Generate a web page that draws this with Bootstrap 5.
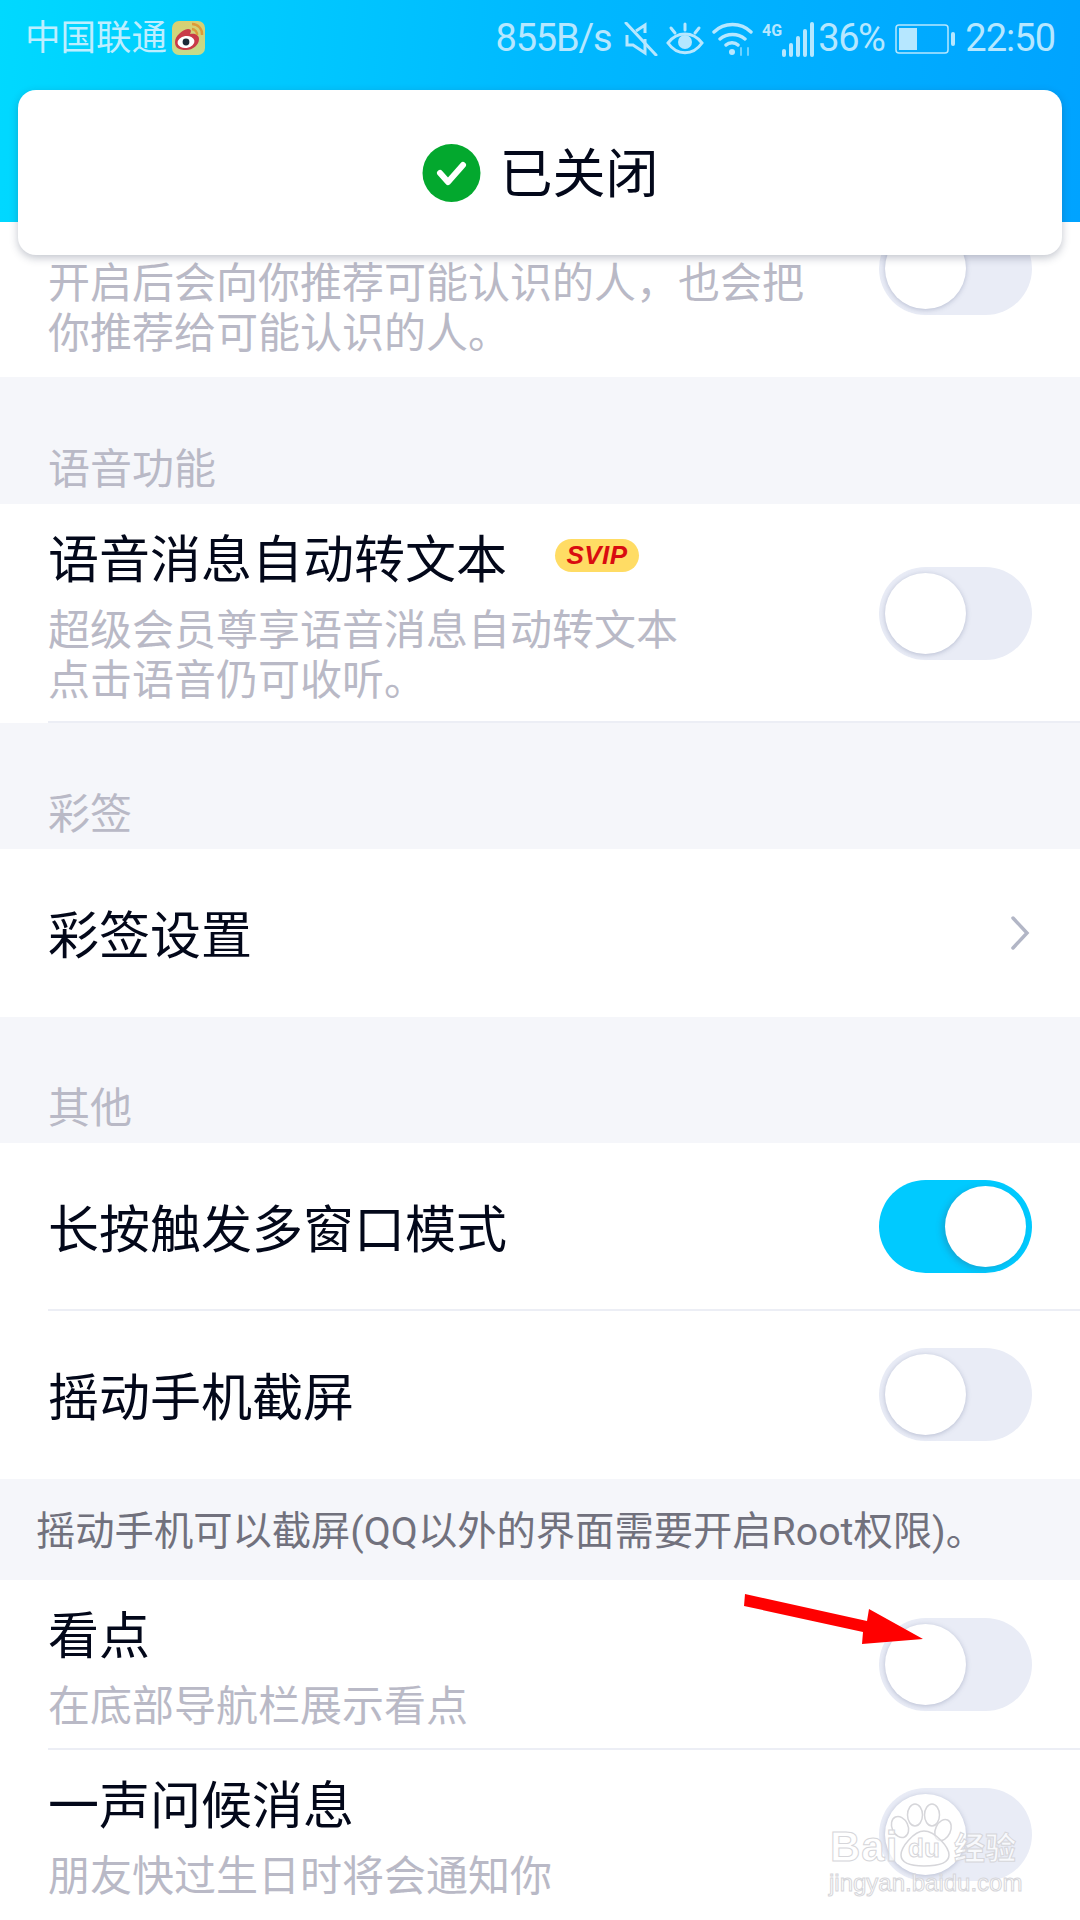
<!DOCTYPE html>
<html lang="zh">
<head>
    <meta charset="UTF-8">
    <meta name="viewport" content="width=device-width, initial-scale=1.0">
    <title>设置</title>
    <link href="https://cdn.jsdelivr.net/npm/bootstrap@5.3.2/dist/css/bootstrap.min.css" rel="stylesheet">
    <style>
        body {
            width: 1080px;
            height: 1920px;
            overflow: hidden;
            background: #f5f6fa;
            font-family: Roboto, "Noto Sans CJK SC", sans-serif;
            color: #03081a;
        }
        .page-wrap { height: 1920px; overflow: hidden; }
        /* top bar */
        .top-head {
            height: 222px;
            background: linear-gradient(95deg, #00d9ff 0%, #00b9ff 50%, #00a3ff 100%);
        }
        .status-bar {
            height: 74px;
            padding: 3px 25px 0 25px;
            color: #b6e7ff;
            font-size: 38px;
            line-height: 71px;
        }
        .carrier { color: #bdeeff; font-size: 35.5px; }
        .speed { letter-spacing: -1.2px; margin-right: 13px; }
        .pct { letter-spacing: -1.5px; margin: 0 11px 0 4px; }
        .clock { margin-left: 10px; letter-spacing: -1px; }
        .weibo-ico { margin-left: 5px; margin-top: -2px; }
        /* toast */
        .toast-box {
            position: absolute;
            left: 18px;
            top: 90px;
            width: 1044px;
            height: 165px;
            background: #fff;
            border-radius: 18px;
            box-shadow: 0 3px 8px rgba(40, 50, 80, .28);
            font-size: 53px;
            z-index: 5;
            gap: 19px;
        }
        .toast-txt { padding-top: 7px; }
        /* rows */
        .set-row { background: #fff; position: relative; padding-left: 48px; }
        .set-row.line-b::after {
            content: "";
            position: absolute;
            left: 48px;
            right: 0;
            bottom: 0;
            height: 2px;
            background: #eceef5;
        }
        .rh-first { height: 155px; }
        .rh-voice { height: 219px; }
        .rh-one { height: 168px; }
        .rh-news { height: 170px; }
        .rh-last { height: 170px; }
        .row-title { font-size: 51px; line-height: 60px; color: #03081a; }
        .row-title.solo { padding-top: 8px; }
        .row-desc { font-size: 42px; line-height: 50px; color: #b9b9c6; }
        .first-desc { padding-top: 37px; }
        .text-stack { padding-top: 27px; }
        .text-stack .row-desc { margin-top: 15px; }
        .sec-label {
            height: 127px;
            padding: 0 0 9px 48px;
            font-size: 42px;
            line-height: 50px;
            color: #b9b9c6;
        }
        .sec-label.is-short { height: 126px; }
        .sw {
            width: 153px;
            height: 93px;
            border-radius: 47px;
            background: #e9ecf6;
            margin-right: 48px;
            padding: 6px;
            flex-shrink: 0;
        }
        .rh-one .sw, .rh-news .sw, .rh-last .sw { margin-bottom: 1px; }
        .sw-knob {
            width: 81px;
            height: 81px;
            border-radius: 50%;
            background: #fff;
            box-shadow: 0 1px 5px rgba(90, 100, 140, .35);
        }
        .sw.is-on { background: #00caff; }
        .sw.is-on .sw-knob { margin-left: auto; box-shadow: -3px 2px 6px rgba(60, 90, 120, .3); }
        .svip-tag {
            width: 84px;
            height: 33px;
            border-radius: 17px;
            background: #ffdc64;
            color: #d90c10;
            font: italic 700 26px/33px "Liberation Sans", sans-serif;
            letter-spacing: .5px;
            text-align: center;
            margin: 0 0 12px 48px;
        }
        .chevron { margin-right: 50px; }
        .note-line {
            height: 101px;
            padding: 28px 0 0 36px;
            font-size: 39.3px;
            line-height: 50px;
            color: #71717d;
        }
        /* things lying on top of the screenshot */
        .mark-layer { position: absolute; left: 0; top: 0; width: 1080px; height: 1920px; pointer-events: none; z-index: 6; }
        .wm-text {
            position: absolute;
            z-index: 7;
            color: rgba(255, 255, 255, .7);
            -webkit-text-stroke: 1px #d6d6da;
            font-family: "Liberation Sans", "Noto Sans CJK SC", sans-serif;
            white-space: nowrap;
        }
        .wm-bai { left: 830px; top: 1822px; font-size: 42px; line-height: 50px; font-weight: 700; letter-spacing: 1px; }
        .wm-du { left: 908px; top: 1832px; font-size: 26px; line-height: 32px; font-weight: 700; }
        .wm-cn { left: 954px; top: 1827px; font-size: 31px; line-height: 44px; font-weight: 700; }
        .wm-url { left: 829px; top: 1868px; font-size: 24px; line-height: 30px; }
    </style>
</head>
<body class="position-relative">
<div class="page-wrap">
    <header class="top-head">
        <div class="status-bar d-flex align-items-center">
            <span class="carrier">中国联通</span>
            <svg class="weibo-ico" width="33" height="34" viewBox="0 0 33 34">
                <defs>
                    <linearGradient id="wbBg" x1="0" y1="0" x2="0" y2="1">
                        <stop offset="0" stop-color="#d8cf72"/>
                        <stop offset="1" stop-color="#c4dc8c"/>
                    </linearGradient>
                </defs>
                <rect width="33" height="34" rx="7" fill="url(#wbBg)"/>
                <path d="M3 21c0-6 7-12 13-13 4 0 3 3 2 5 5-1 9 1 9 5 0 6-6 11-13 11S3 27 3 21z" fill="#c93a48"/>
                <ellipse cx="14" cy="21" rx="8.5" ry="6" fill="#fff" transform="rotate(-8 14 21)"/>
                <circle cx="14" cy="21" r="3.4" fill="#1c2a38"/>
                <path d="M20 3a10 10 0 0 1 10 11M20 8a5.5 5.5 0 0 1 5 6" fill="none" stroke="#dc9a3a" stroke-width="2.4"/>
            </svg>
            <div class="ms-auto d-flex align-items-center">
                <span class="speed">855B/s</span>
                <svg width="34" height="34" viewBox="0 0 34 34" fill="none" stroke="#b6e7ff" stroke-width="3" class="me-2">
                    <path d="M3 13v10h6l12 8V17M21 11V3l-9 6"/>
                    <path d="M2 1l30 32" stroke-linecap="round"/>
                </svg>
                <svg width="38" height="34" viewBox="0 0 38 34" fill="none" stroke="#b6e7ff" stroke-width="3" class="me-2">
                    <path d="M2 21c9-12 25-12 34 0-9 13-25 13-34 0z"/>
                    <circle cx="19" cy="20" r="7" fill="#b6e7ff" stroke="none"/>
                    <path d="M19 2v6M5 6l4 5M33 6l-4 5" stroke-linecap="round"/>
                </svg>
                <svg width="42" height="34" viewBox="0 0 42 34" fill="none" stroke="#b6e7ff" stroke-width="3.4" stroke-linecap="round">
                    <path d="M2 10c10-10 27-10 37 0M8 17c7-6 18-6 25 0M14 23c3-3 9-3 12 0"/>
                    <circle cx="20" cy="30" r="3" fill="#b6e7ff" stroke="none"/>
                    <path d="M29 26v7M36 26v7" stroke-width="2" opacity=".6"/>
                </svg>
                <svg width="52" height="36" viewBox="0 0 52 36" class="ms-2">
                    <text x="0" y="15" font-family="Roboto, sans-serif" font-size="16" font-weight="700" fill="#b6e7ff">4G</text>
                    <g fill="#b6e7ff">
                        <rect x="20" y="28" width="4" height="8" rx="2"/>
                        <rect x="27" y="22" width="4" height="14" rx="2"/>
                        <rect x="34" y="15" width="4" height="21" rx="2"/>
                        <rect x="41" y="8" width="4" height="28" rx="2"/>
                        <rect x="48" y="1" width="4" height="35" rx="2"/>
                    </g>
                </svg>
                <span class="pct">36%</span>
                <svg width="60" height="30" viewBox="0 0 60 30">
                    <rect x="1" y="1" width="52" height="28" rx="3" fill="none" stroke="#b6e7ff" stroke-width="1.5"/>
                    <rect x="4" y="4" width="18" height="22" fill="#b6e7ff"/>
                    <rect x="56" y="8" width="4" height="14" rx="2" fill="#b6e7ff"/>
                </svg>
                <span class="clock">22:50</span>
            </div>
        </div>
    </header>

    <section class="set-row rh-first d-flex justify-content-between">
        <div class="row-desc first-desc">开启后会向你推荐可能认识的人，也会把<br>你推荐给可能认识的人。</div>
        <div class="sw"><div class="sw-knob"></div></div>
    </section>

    <div class="sec-label d-flex align-items-end">语音功能</div>
    <section class="set-row line-b rh-voice d-flex justify-content-between align-items-center">
        <div class="text-stack align-self-start">
            <div class="d-flex align-items-center row-title">语音消息自动转文本<span class="svip-tag">SVIP</span></div>
            <div class="row-desc">超级会员尊享语音消息自动转文本<br>点击语音仍可收听。</div>
        </div>
        <div class="sw"><div class="sw-knob"></div></div>
    </section>

    <div class="sec-label is-short d-flex align-items-end">彩签</div>
    <section class="set-row rh-one d-flex justify-content-between align-items-center">
        <div class="row-title solo">彩签设置</div>
        <svg class="chevron" width="20" height="34" viewBox="0 0 20 34" fill="none" stroke="#b2b6c6" stroke-width="3.5" stroke-linecap="round">
            <path d="M3 2l14 15L3 32"/>
        </svg>
    </section>

    <div class="sec-label is-short d-flex align-items-end">其他</div>
    <section class="set-row line-b rh-one d-flex justify-content-between align-items-center">
        <div class="row-title solo">长按触发多窗口模式</div>
        <div class="sw is-on"><div class="sw-knob"></div></div>
    </section>
    <section class="set-row rh-one d-flex justify-content-between align-items-center">
        <div class="row-title solo">摇动手机截屏</div>
        <div class="sw"><div class="sw-knob"></div></div>
    </section>
    <div class="note-line">摇动手机可以截屏(QQ以外的界面需要开启Root权限)。</div>

    <section class="set-row line-b rh-news d-flex justify-content-between align-items-center">
        <div class="text-stack align-self-start">
            <div class="row-title">看点</div>
            <div class="row-desc">在底部导航栏展示看点</div>
        </div>
        <div class="sw"><div class="sw-knob"></div></div>
    </section>
    <section class="set-row rh-last d-flex justify-content-between align-items-center">
        <div class="text-stack align-self-start">
            <div class="row-title">一声问候消息</div>
            <div class="row-desc">朋友快过生日时将会通知你</div>
        </div>
        <div class="sw"><div class="sw-knob"></div></div>
    </section>
</div>

<!-- 顶部提示 -->
<div class="toast-box d-flex align-items-center justify-content-center">
    <svg width="59" height="60" viewBox="0 0 59 60">
        <circle cx="29.5" cy="30" r="29" fill="#03a82e"/>
        <path d="M18 30l8 9 15-17" fill="none" stroke="#fff" stroke-width="6" stroke-linecap="round" stroke-linejoin="round"/>
    </svg>
    <span class="toast-txt">已关闭</span>
</div>

<!-- 红色箭头和水印 -->
<svg class="mark-layer" viewBox="0 0 1080 1920">
    <polygon fill="#ff0000" points="745,1594 744,1606 863,1632 862,1644 923,1639 869,1609 867,1621"/>
    <g fill="rgba(255,255,255,.55)" stroke="#d6d6da" stroke-width="1.5">
        <ellipse cx="900" cy="1827" rx="8" ry="11" transform="rotate(-25 900 1827)"/>
        <ellipse cx="915" cy="1815" rx="7.5" ry="11"/>
        <ellipse cx="932" cy="1815" rx="7.5" ry="11"/>
        <ellipse cx="943" cy="1830" rx="7.5" ry="11" transform="rotate(25 943 1830)"/>
        <path d="M924 1831c11 0 25 16 25 24 0 7-8 11-25 11s-23-4-23-11c0-8 13-24 23-24z"/>
    </g>
</svg>
<div class="wm-text wm-bai">Bai</div>
<div class="wm-text wm-du">du</div>
<div class="wm-text wm-cn">经验</div>
<div class="wm-text wm-url">jingyan.baidu.com</div>
<script src="https://cdn.jsdelivr.net/npm/bootstrap@5.3.2/dist/js/bootstrap.bundle.min.js"></script>
</body>
</html>
